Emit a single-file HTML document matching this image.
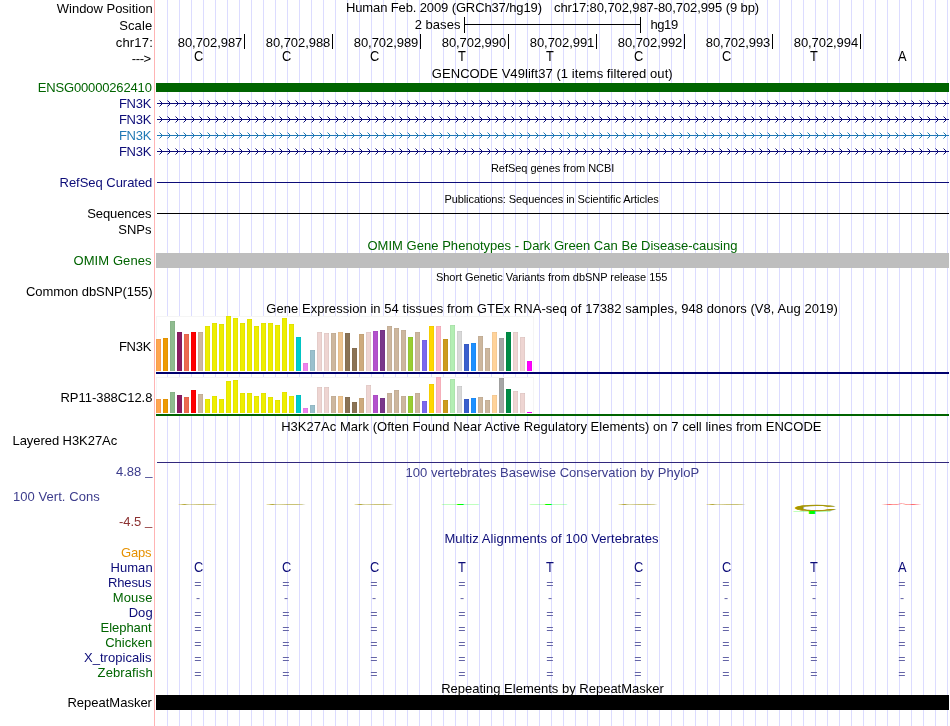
<!DOCTYPE html>
<html><head><meta charset="utf-8"><title>UCSC Genome Browser chr17:80,702,987-80,702,995</title>
<style>
html,body{margin:0;padding:0;background:#fff;}
#w{position:absolute;left:0;top:0;width:950px;height:726px;overflow:hidden;font-family:"Liberation Sans", sans-serif;}
#tx{position:absolute;left:0;top:0;width:950px;height:726px;will-change:transform;}
.t{position:absolute;white-space:nowrap;font-size:13px;line-height:17px;}
.g{font-size:14px;line-height:18px;transform:scaleX(0.915);transform-origin:0 0;}
.s{font-size:11px;line-height:15px;}
.q{font-size:12.4px;line-height:16px;}
.b{position:absolute;}
#grid{left:156px;top:0;width:794px;height:726px;background:repeating-linear-gradient(to right,transparent 0,transparent 11px,#dcdcff 11px,#dcdcff 12px);}
</style></head><body><div id="w">
<div class="b" id="grid"></div>
<div class="b" style="left:154px;top:0px;width:1px;height:726px;background:#ffb4b4;"></div>
<div class="b" style="left:464px;top:17px;width:1px;height:16px;background:#000;"></div>
<div class="b" style="left:464px;top:24px;width:177px;height:1px;background:#000;"></div>
<div class="b" style="left:640px;top:17px;width:1px;height:16px;background:#000;"></div>
<div class="b" style="left:244px;top:34px;width:1px;height:15px;background:#000;"></div>
<div class="b" style="left:332px;top:34px;width:1px;height:15px;background:#000;"></div>
<div class="b" style="left:420px;top:34px;width:1px;height:15px;background:#000;"></div>
<div class="b" style="left:508px;top:34px;width:1px;height:15px;background:#000;"></div>
<div class="b" style="left:596px;top:34px;width:1px;height:15px;background:#000;"></div>
<div class="b" style="left:684px;top:34px;width:1px;height:15px;background:#000;"></div>
<div class="b" style="left:772px;top:34px;width:1px;height:15px;background:#000;"></div>
<div class="b" style="left:860px;top:34px;width:1px;height:15px;background:#000;"></div>
<div class="b" style="left:156px;top:83px;width:793px;height:9px;background:#006400;"></div>
<svg class="b" style="left:0;top:99px" width="950" height="9" viewBox="0 -4 950 9"><path d="M157 0.5H949" stroke="#0c0c78" stroke-width="1" fill="none"/><path transform="translate(0.5,0.5)" d="M159 -3L162 0L159 3M167 -3L170 0L167 3M175 -3L178 0L175 3M183 -3L186 0L183 3M191 -3L194 0L191 3M199 -3L202 0L199 3M207 -3L210 0L207 3M215 -3L218 0L215 3M223 -3L226 0L223 3M231 -3L234 0L231 3M239 -3L242 0L239 3M247 -3L250 0L247 3M255 -3L258 0L255 3M263 -3L266 0L263 3M271 -3L274 0L271 3M279 -3L282 0L279 3M287 -3L290 0L287 3M295 -3L298 0L295 3M303 -3L306 0L303 3M311 -3L314 0L311 3M319 -3L322 0L319 3M327 -3L330 0L327 3M335 -3L338 0L335 3M343 -3L346 0L343 3M351 -3L354 0L351 3M359 -3L362 0L359 3M367 -3L370 0L367 3M375 -3L378 0L375 3M383 -3L386 0L383 3M391 -3L394 0L391 3M399 -3L402 0L399 3M407 -3L410 0L407 3M415 -3L418 0L415 3M423 -3L426 0L423 3M431 -3L434 0L431 3M439 -3L442 0L439 3M447 -3L450 0L447 3M455 -3L458 0L455 3M463 -3L466 0L463 3M471 -3L474 0L471 3M479 -3L482 0L479 3M487 -3L490 0L487 3M495 -3L498 0L495 3M503 -3L506 0L503 3M511 -3L514 0L511 3M519 -3L522 0L519 3M527 -3L530 0L527 3M535 -3L538 0L535 3M543 -3L546 0L543 3M551 -3L554 0L551 3M559 -3L562 0L559 3M567 -3L570 0L567 3M575 -3L578 0L575 3M583 -3L586 0L583 3M591 -3L594 0L591 3M599 -3L602 0L599 3M607 -3L610 0L607 3M615 -3L618 0L615 3M623 -3L626 0L623 3M631 -3L634 0L631 3M639 -3L642 0L639 3M647 -3L650 0L647 3M655 -3L658 0L655 3M663 -3L666 0L663 3M671 -3L674 0L671 3M679 -3L682 0L679 3M687 -3L690 0L687 3M695 -3L698 0L695 3M703 -3L706 0L703 3M711 -3L714 0L711 3M719 -3L722 0L719 3M727 -3L730 0L727 3M735 -3L738 0L735 3M743 -3L746 0L743 3M751 -3L754 0L751 3M759 -3L762 0L759 3M767 -3L770 0L767 3M775 -3L778 0L775 3M783 -3L786 0L783 3M791 -3L794 0L791 3M799 -3L802 0L799 3M807 -3L810 0L807 3M815 -3L818 0L815 3M823 -3L826 0L823 3M831 -3L834 0L831 3M839 -3L842 0L839 3M847 -3L850 0L847 3M855 -3L858 0L855 3M863 -3L866 0L863 3M871 -3L874 0L871 3M879 -3L882 0L879 3M887 -3L890 0L887 3M895 -3L898 0L895 3M903 -3L906 0L903 3M911 -3L914 0L911 3M919 -3L922 0L919 3M927 -3L930 0L927 3M935 -3L938 0L935 3M943 -3L946 0L943 3" stroke="#0c0c78" stroke-width="1" fill="none"/></svg>
<svg class="b" style="left:0;top:115px" width="950" height="9" viewBox="0 -4 950 9"><path d="M157 0.5H949" stroke="#0c0c78" stroke-width="1" fill="none"/><path transform="translate(0.5,0.5)" d="M159 -3L162 0L159 3M167 -3L170 0L167 3M175 -3L178 0L175 3M183 -3L186 0L183 3M191 -3L194 0L191 3M199 -3L202 0L199 3M207 -3L210 0L207 3M215 -3L218 0L215 3M223 -3L226 0L223 3M231 -3L234 0L231 3M239 -3L242 0L239 3M247 -3L250 0L247 3M255 -3L258 0L255 3M263 -3L266 0L263 3M271 -3L274 0L271 3M279 -3L282 0L279 3M287 -3L290 0L287 3M295 -3L298 0L295 3M303 -3L306 0L303 3M311 -3L314 0L311 3M319 -3L322 0L319 3M327 -3L330 0L327 3M335 -3L338 0L335 3M343 -3L346 0L343 3M351 -3L354 0L351 3M359 -3L362 0L359 3M367 -3L370 0L367 3M375 -3L378 0L375 3M383 -3L386 0L383 3M391 -3L394 0L391 3M399 -3L402 0L399 3M407 -3L410 0L407 3M415 -3L418 0L415 3M423 -3L426 0L423 3M431 -3L434 0L431 3M439 -3L442 0L439 3M447 -3L450 0L447 3M455 -3L458 0L455 3M463 -3L466 0L463 3M471 -3L474 0L471 3M479 -3L482 0L479 3M487 -3L490 0L487 3M495 -3L498 0L495 3M503 -3L506 0L503 3M511 -3L514 0L511 3M519 -3L522 0L519 3M527 -3L530 0L527 3M535 -3L538 0L535 3M543 -3L546 0L543 3M551 -3L554 0L551 3M559 -3L562 0L559 3M567 -3L570 0L567 3M575 -3L578 0L575 3M583 -3L586 0L583 3M591 -3L594 0L591 3M599 -3L602 0L599 3M607 -3L610 0L607 3M615 -3L618 0L615 3M623 -3L626 0L623 3M631 -3L634 0L631 3M639 -3L642 0L639 3M647 -3L650 0L647 3M655 -3L658 0L655 3M663 -3L666 0L663 3M671 -3L674 0L671 3M679 -3L682 0L679 3M687 -3L690 0L687 3M695 -3L698 0L695 3M703 -3L706 0L703 3M711 -3L714 0L711 3M719 -3L722 0L719 3M727 -3L730 0L727 3M735 -3L738 0L735 3M743 -3L746 0L743 3M751 -3L754 0L751 3M759 -3L762 0L759 3M767 -3L770 0L767 3M775 -3L778 0L775 3M783 -3L786 0L783 3M791 -3L794 0L791 3M799 -3L802 0L799 3M807 -3L810 0L807 3M815 -3L818 0L815 3M823 -3L826 0L823 3M831 -3L834 0L831 3M839 -3L842 0L839 3M847 -3L850 0L847 3M855 -3L858 0L855 3M863 -3L866 0L863 3M871 -3L874 0L871 3M879 -3L882 0L879 3M887 -3L890 0L887 3M895 -3L898 0L895 3M903 -3L906 0L903 3M911 -3L914 0L911 3M919 -3L922 0L919 3M927 -3L930 0L927 3M935 -3L938 0L935 3M943 -3L946 0L943 3" stroke="#0c0c78" stroke-width="1" fill="none"/></svg>
<svg class="b" style="left:0;top:131px" width="950" height="9" viewBox="0 -4 950 9"><path d="M157 0.5H949" stroke="#1f78b4" stroke-width="1" fill="none"/><path transform="translate(0.5,0.5)" d="M159 -3L162 0L159 3M167 -3L170 0L167 3M175 -3L178 0L175 3M183 -3L186 0L183 3M191 -3L194 0L191 3M199 -3L202 0L199 3M207 -3L210 0L207 3M215 -3L218 0L215 3M223 -3L226 0L223 3M231 -3L234 0L231 3M239 -3L242 0L239 3M247 -3L250 0L247 3M255 -3L258 0L255 3M263 -3L266 0L263 3M271 -3L274 0L271 3M279 -3L282 0L279 3M287 -3L290 0L287 3M295 -3L298 0L295 3M303 -3L306 0L303 3M311 -3L314 0L311 3M319 -3L322 0L319 3M327 -3L330 0L327 3M335 -3L338 0L335 3M343 -3L346 0L343 3M351 -3L354 0L351 3M359 -3L362 0L359 3M367 -3L370 0L367 3M375 -3L378 0L375 3M383 -3L386 0L383 3M391 -3L394 0L391 3M399 -3L402 0L399 3M407 -3L410 0L407 3M415 -3L418 0L415 3M423 -3L426 0L423 3M431 -3L434 0L431 3M439 -3L442 0L439 3M447 -3L450 0L447 3M455 -3L458 0L455 3M463 -3L466 0L463 3M471 -3L474 0L471 3M479 -3L482 0L479 3M487 -3L490 0L487 3M495 -3L498 0L495 3M503 -3L506 0L503 3M511 -3L514 0L511 3M519 -3L522 0L519 3M527 -3L530 0L527 3M535 -3L538 0L535 3M543 -3L546 0L543 3M551 -3L554 0L551 3M559 -3L562 0L559 3M567 -3L570 0L567 3M575 -3L578 0L575 3M583 -3L586 0L583 3M591 -3L594 0L591 3M599 -3L602 0L599 3M607 -3L610 0L607 3M615 -3L618 0L615 3M623 -3L626 0L623 3M631 -3L634 0L631 3M639 -3L642 0L639 3M647 -3L650 0L647 3M655 -3L658 0L655 3M663 -3L666 0L663 3M671 -3L674 0L671 3M679 -3L682 0L679 3M687 -3L690 0L687 3M695 -3L698 0L695 3M703 -3L706 0L703 3M711 -3L714 0L711 3M719 -3L722 0L719 3M727 -3L730 0L727 3M735 -3L738 0L735 3M743 -3L746 0L743 3M751 -3L754 0L751 3M759 -3L762 0L759 3M767 -3L770 0L767 3M775 -3L778 0L775 3M783 -3L786 0L783 3M791 -3L794 0L791 3M799 -3L802 0L799 3M807 -3L810 0L807 3M815 -3L818 0L815 3M823 -3L826 0L823 3M831 -3L834 0L831 3M839 -3L842 0L839 3M847 -3L850 0L847 3M855 -3L858 0L855 3M863 -3L866 0L863 3M871 -3L874 0L871 3M879 -3L882 0L879 3M887 -3L890 0L887 3M895 -3L898 0L895 3M903 -3L906 0L903 3M911 -3L914 0L911 3M919 -3L922 0L919 3M927 -3L930 0L927 3M935 -3L938 0L935 3M943 -3L946 0L943 3" stroke="#1f78b4" stroke-width="1" fill="none"/></svg>
<svg class="b" style="left:0;top:147px" width="950" height="9" viewBox="0 -4 950 9"><path d="M157 0.5H949" stroke="#0c0c78" stroke-width="1" fill="none"/><path transform="translate(0.5,0.5)" d="M159 -3L162 0L159 3M167 -3L170 0L167 3M175 -3L178 0L175 3M183 -3L186 0L183 3M191 -3L194 0L191 3M199 -3L202 0L199 3M207 -3L210 0L207 3M215 -3L218 0L215 3M223 -3L226 0L223 3M231 -3L234 0L231 3M239 -3L242 0L239 3M247 -3L250 0L247 3M255 -3L258 0L255 3M263 -3L266 0L263 3M271 -3L274 0L271 3M279 -3L282 0L279 3M287 -3L290 0L287 3M295 -3L298 0L295 3M303 -3L306 0L303 3M311 -3L314 0L311 3M319 -3L322 0L319 3M327 -3L330 0L327 3M335 -3L338 0L335 3M343 -3L346 0L343 3M351 -3L354 0L351 3M359 -3L362 0L359 3M367 -3L370 0L367 3M375 -3L378 0L375 3M383 -3L386 0L383 3M391 -3L394 0L391 3M399 -3L402 0L399 3M407 -3L410 0L407 3M415 -3L418 0L415 3M423 -3L426 0L423 3M431 -3L434 0L431 3M439 -3L442 0L439 3M447 -3L450 0L447 3M455 -3L458 0L455 3M463 -3L466 0L463 3M471 -3L474 0L471 3M479 -3L482 0L479 3M487 -3L490 0L487 3M495 -3L498 0L495 3M503 -3L506 0L503 3M511 -3L514 0L511 3M519 -3L522 0L519 3M527 -3L530 0L527 3M535 -3L538 0L535 3M543 -3L546 0L543 3M551 -3L554 0L551 3M559 -3L562 0L559 3M567 -3L570 0L567 3M575 -3L578 0L575 3M583 -3L586 0L583 3M591 -3L594 0L591 3M599 -3L602 0L599 3M607 -3L610 0L607 3M615 -3L618 0L615 3M623 -3L626 0L623 3M631 -3L634 0L631 3M639 -3L642 0L639 3M647 -3L650 0L647 3M655 -3L658 0L655 3M663 -3L666 0L663 3M671 -3L674 0L671 3M679 -3L682 0L679 3M687 -3L690 0L687 3M695 -3L698 0L695 3M703 -3L706 0L703 3M711 -3L714 0L711 3M719 -3L722 0L719 3M727 -3L730 0L727 3M735 -3L738 0L735 3M743 -3L746 0L743 3M751 -3L754 0L751 3M759 -3L762 0L759 3M767 -3L770 0L767 3M775 -3L778 0L775 3M783 -3L786 0L783 3M791 -3L794 0L791 3M799 -3L802 0L799 3M807 -3L810 0L807 3M815 -3L818 0L815 3M823 -3L826 0L823 3M831 -3L834 0L831 3M839 -3L842 0L839 3M847 -3L850 0L847 3M855 -3L858 0L855 3M863 -3L866 0L863 3M871 -3L874 0L871 3M879 -3L882 0L879 3M887 -3L890 0L887 3M895 -3L898 0L895 3M903 -3L906 0L903 3M911 -3L914 0L911 3M919 -3L922 0L919 3M927 -3L930 0L927 3M935 -3L938 0L935 3M943 -3L946 0L943 3" stroke="#0c0c78" stroke-width="1" fill="none"/></svg>
<div class="b" style="left:157px;top:182px;width:792px;height:1px;background:#0c0c78;"></div>
<div class="b" style="left:157px;top:213px;width:792px;height:1px;background:#000;"></div>
<div class="b" style="left:156px;top:253px;width:793px;height:15px;background:#bebebe;"></div>
<div class="b" style="left:156px;top:316px;width:378px;height:56px;background:#fff;box-shadow:inset 0 1px 0 #f5f5f5, inset -1px 0 0 #f5f5f5, inset 1px 0 0 #f5f5f5;"></div>
<div class="b" style="left:156px;top:339px;width:5px;height:32px;background:#FFA54F;box-shadow:inset 1px 1px 0 rgba(0,0,0,0.04),inset -1px 0 0 rgba(0,0,0,0.04);"></div>
<div class="b" style="left:163px;top:338px;width:5px;height:33px;background:#EE9A00;box-shadow:inset 1px 1px 0 rgba(0,0,0,0.04),inset -1px 0 0 rgba(0,0,0,0.04);"></div>
<div class="b" style="left:170px;top:321px;width:5px;height:50px;background:#8FBC8F;box-shadow:inset 1px 1px 0 rgba(0,0,0,0.04),inset -1px 0 0 rgba(0,0,0,0.04);"></div>
<div class="b" style="left:177px;top:332px;width:5px;height:39px;background:#8B1C62;box-shadow:inset 1px 1px 0 rgba(0,0,0,0.04),inset -1px 0 0 rgba(0,0,0,0.04);"></div>
<div class="b" style="left:184px;top:334px;width:5px;height:37px;background:#EE6A50;box-shadow:inset 1px 1px 0 rgba(0,0,0,0.04),inset -1px 0 0 rgba(0,0,0,0.04);"></div>
<div class="b" style="left:191px;top:332px;width:5px;height:39px;background:#FF0000;box-shadow:inset 1px 1px 0 rgba(0,0,0,0.04),inset -1px 0 0 rgba(0,0,0,0.04);"></div>
<div class="b" style="left:198px;top:332px;width:5px;height:39px;background:#CDB79E;box-shadow:inset 1px 1px 0 rgba(0,0,0,0.04),inset -1px 0 0 rgba(0,0,0,0.04);"></div>
<div class="b" style="left:205px;top:326px;width:5px;height:45px;background:#EEEE00;box-shadow:inset 1px 1px 0 rgba(0,0,0,0.04),inset -1px 0 0 rgba(0,0,0,0.04);"></div>
<div class="b" style="left:212px;top:323px;width:5px;height:48px;background:#EEEE00;box-shadow:inset 1px 1px 0 rgba(0,0,0,0.04),inset -1px 0 0 rgba(0,0,0,0.04);"></div>
<div class="b" style="left:219px;top:324px;width:5px;height:47px;background:#EEEE00;box-shadow:inset 1px 1px 0 rgba(0,0,0,0.04),inset -1px 0 0 rgba(0,0,0,0.04);"></div>
<div class="b" style="left:226px;top:316px;width:5px;height:55px;background:#EEEE00;box-shadow:inset 1px 1px 0 rgba(0,0,0,0.04),inset -1px 0 0 rgba(0,0,0,0.04);"></div>
<div class="b" style="left:233px;top:318px;width:5px;height:53px;background:#EEEE00;box-shadow:inset 1px 1px 0 rgba(0,0,0,0.04),inset -1px 0 0 rgba(0,0,0,0.04);"></div>
<div class="b" style="left:240px;top:323px;width:5px;height:48px;background:#EEEE00;box-shadow:inset 1px 1px 0 rgba(0,0,0,0.04),inset -1px 0 0 rgba(0,0,0,0.04);"></div>
<div class="b" style="left:247px;top:319px;width:5px;height:52px;background:#EEEE00;box-shadow:inset 1px 1px 0 rgba(0,0,0,0.04),inset -1px 0 0 rgba(0,0,0,0.04);"></div>
<div class="b" style="left:254px;top:326px;width:5px;height:45px;background:#EEEE00;box-shadow:inset 1px 1px 0 rgba(0,0,0,0.04),inset -1px 0 0 rgba(0,0,0,0.04);"></div>
<div class="b" style="left:261px;top:323px;width:5px;height:48px;background:#EEEE00;box-shadow:inset 1px 1px 0 rgba(0,0,0,0.04),inset -1px 0 0 rgba(0,0,0,0.04);"></div>
<div class="b" style="left:268px;top:323px;width:5px;height:48px;background:#EEEE00;box-shadow:inset 1px 1px 0 rgba(0,0,0,0.04),inset -1px 0 0 rgba(0,0,0,0.04);"></div>
<div class="b" style="left:275px;top:325px;width:5px;height:46px;background:#EEEE00;box-shadow:inset 1px 1px 0 rgba(0,0,0,0.04),inset -1px 0 0 rgba(0,0,0,0.04);"></div>
<div class="b" style="left:282px;top:318px;width:5px;height:53px;background:#EEEE00;box-shadow:inset 1px 1px 0 rgba(0,0,0,0.04),inset -1px 0 0 rgba(0,0,0,0.04);"></div>
<div class="b" style="left:289px;top:324px;width:5px;height:47px;background:#EEEE00;box-shadow:inset 1px 1px 0 rgba(0,0,0,0.04),inset -1px 0 0 rgba(0,0,0,0.04);"></div>
<div class="b" style="left:296px;top:337px;width:5px;height:34px;background:#00CDCD;box-shadow:inset 1px 1px 0 rgba(0,0,0,0.04),inset -1px 0 0 rgba(0,0,0,0.04);"></div>
<div class="b" style="left:303px;top:363px;width:5px;height:8px;background:#EE82EE;box-shadow:inset 1px 1px 0 rgba(0,0,0,0.04),inset -1px 0 0 rgba(0,0,0,0.04);"></div>
<div class="b" style="left:310px;top:350px;width:5px;height:21px;background:#9AC0CD;box-shadow:inset 1px 1px 0 rgba(0,0,0,0.04),inset -1px 0 0 rgba(0,0,0,0.04);"></div>
<div class="b" style="left:317px;top:332px;width:5px;height:39px;background:#EED5D2;box-shadow:inset 1px 1px 0 rgba(0,0,0,0.04),inset -1px 0 0 rgba(0,0,0,0.04);"></div>
<div class="b" style="left:324px;top:333px;width:5px;height:38px;background:#EED5D2;box-shadow:inset 1px 1px 0 rgba(0,0,0,0.04),inset -1px 0 0 rgba(0,0,0,0.04);"></div>
<div class="b" style="left:331px;top:333px;width:5px;height:38px;background:#CDB79E;box-shadow:inset 1px 1px 0 rgba(0,0,0,0.04),inset -1px 0 0 rgba(0,0,0,0.04);"></div>
<div class="b" style="left:338px;top:332px;width:5px;height:39px;background:#EEC591;box-shadow:inset 1px 1px 0 rgba(0,0,0,0.04),inset -1px 0 0 rgba(0,0,0,0.04);"></div>
<div class="b" style="left:345px;top:333px;width:5px;height:38px;background:#8B7355;box-shadow:inset 1px 1px 0 rgba(0,0,0,0.04),inset -1px 0 0 rgba(0,0,0,0.04);"></div>
<div class="b" style="left:352px;top:348px;width:5px;height:23px;background:#8B7355;box-shadow:inset 1px 1px 0 rgba(0,0,0,0.04),inset -1px 0 0 rgba(0,0,0,0.04);"></div>
<div class="b" style="left:359px;top:334px;width:5px;height:37px;background:#CDAA7D;box-shadow:inset 1px 1px 0 rgba(0,0,0,0.04),inset -1px 0 0 rgba(0,0,0,0.04);"></div>
<div class="b" style="left:366px;top:332px;width:5px;height:39px;background:#EED5D2;box-shadow:inset 1px 1px 0 rgba(0,0,0,0.04),inset -1px 0 0 rgba(0,0,0,0.04);"></div>
<div class="b" style="left:373px;top:331px;width:5px;height:40px;background:#B452CD;box-shadow:inset 1px 1px 0 rgba(0,0,0,0.04),inset -1px 0 0 rgba(0,0,0,0.04);"></div>
<div class="b" style="left:380px;top:330px;width:5px;height:41px;background:#7A378B;box-shadow:inset 1px 1px 0 rgba(0,0,0,0.04),inset -1px 0 0 rgba(0,0,0,0.04);"></div>
<div class="b" style="left:387px;top:326px;width:5px;height:45px;background:#CDB79E;box-shadow:inset 1px 1px 0 rgba(0,0,0,0.04),inset -1px 0 0 rgba(0,0,0,0.04);"></div>
<div class="b" style="left:394px;top:328px;width:5px;height:43px;background:#CDB79E;box-shadow:inset 1px 1px 0 rgba(0,0,0,0.04),inset -1px 0 0 rgba(0,0,0,0.04);"></div>
<div class="b" style="left:401px;top:330px;width:5px;height:41px;background:#CDB79E;box-shadow:inset 1px 1px 0 rgba(0,0,0,0.04),inset -1px 0 0 rgba(0,0,0,0.04);"></div>
<div class="b" style="left:408px;top:337px;width:5px;height:34px;background:#9ACD32;box-shadow:inset 1px 1px 0 rgba(0,0,0,0.04),inset -1px 0 0 rgba(0,0,0,0.04);"></div>
<div class="b" style="left:415px;top:332px;width:5px;height:39px;background:#CDB79E;box-shadow:inset 1px 1px 0 rgba(0,0,0,0.04),inset -1px 0 0 rgba(0,0,0,0.04);"></div>
<div class="b" style="left:422px;top:340px;width:5px;height:31px;background:#7A67EE;box-shadow:inset 1px 1px 0 rgba(0,0,0,0.04),inset -1px 0 0 rgba(0,0,0,0.04);"></div>
<div class="b" style="left:429px;top:326px;width:5px;height:45px;background:#FFD700;box-shadow:inset 1px 1px 0 rgba(0,0,0,0.04),inset -1px 0 0 rgba(0,0,0,0.04);"></div>
<div class="b" style="left:436px;top:326px;width:5px;height:45px;background:#FFB6C1;box-shadow:inset 1px 1px 0 rgba(0,0,0,0.04),inset -1px 0 0 rgba(0,0,0,0.04);"></div>
<div class="b" style="left:443px;top:339px;width:5px;height:32px;background:#CD9B1D;box-shadow:inset 1px 1px 0 rgba(0,0,0,0.04),inset -1px 0 0 rgba(0,0,0,0.04);"></div>
<div class="b" style="left:450px;top:325px;width:5px;height:46px;background:#B4EEB4;box-shadow:inset 1px 1px 0 rgba(0,0,0,0.04),inset -1px 0 0 rgba(0,0,0,0.04);"></div>
<div class="b" style="left:457px;top:331px;width:5px;height:40px;background:#D9D9D9;box-shadow:inset 1px 1px 0 rgba(0,0,0,0.04),inset -1px 0 0 rgba(0,0,0,0.04);"></div>
<div class="b" style="left:464px;top:344px;width:5px;height:27px;background:#3A5FCD;box-shadow:inset 1px 1px 0 rgba(0,0,0,0.04),inset -1px 0 0 rgba(0,0,0,0.04);"></div>
<div class="b" style="left:471px;top:343px;width:5px;height:28px;background:#1E90FF;box-shadow:inset 1px 1px 0 rgba(0,0,0,0.04),inset -1px 0 0 rgba(0,0,0,0.04);"></div>
<div class="b" style="left:478px;top:336px;width:5px;height:35px;background:#CDB79E;box-shadow:inset 1px 1px 0 rgba(0,0,0,0.04),inset -1px 0 0 rgba(0,0,0,0.04);"></div>
<div class="b" style="left:485px;top:348px;width:5px;height:23px;background:#CDB79E;box-shadow:inset 1px 1px 0 rgba(0,0,0,0.04),inset -1px 0 0 rgba(0,0,0,0.04);"></div>
<div class="b" style="left:492px;top:332px;width:5px;height:39px;background:#FFD39B;box-shadow:inset 1px 1px 0 rgba(0,0,0,0.04),inset -1px 0 0 rgba(0,0,0,0.04);"></div>
<div class="b" style="left:499px;top:338px;width:5px;height:33px;background:#A6A6A6;box-shadow:inset 1px 1px 0 rgba(0,0,0,0.04),inset -1px 0 0 rgba(0,0,0,0.04);"></div>
<div class="b" style="left:506px;top:332px;width:5px;height:39px;background:#008B45;box-shadow:inset 1px 1px 0 rgba(0,0,0,0.04),inset -1px 0 0 rgba(0,0,0,0.04);"></div>
<div class="b" style="left:513px;top:332px;width:5px;height:39px;background:#EED5D2;box-shadow:inset 1px 1px 0 rgba(0,0,0,0.04),inset -1px 0 0 rgba(0,0,0,0.04);"></div>
<div class="b" style="left:520px;top:337px;width:5px;height:34px;background:#EED5D2;box-shadow:inset 1px 1px 0 rgba(0,0,0,0.04),inset -1px 0 0 rgba(0,0,0,0.04);"></div>
<div class="b" style="left:527px;top:361px;width:5px;height:10px;background:#FF00FF;box-shadow:inset 1px 1px 0 rgba(0,0,0,0.04),inset -1px 0 0 rgba(0,0,0,0.04);"></div>
<div class="b" style="left:156px;top:372px;width:793px;height:2px;background:#00006e;"></div>
<div class="b" style="left:156px;top:377px;width:378px;height:37px;background:#fff;box-shadow:inset 0 1px 0 #f5f5f5, inset -1px 0 0 #f5f5f5, inset 1px 0 0 #f5f5f5;"></div>
<div class="b" style="left:156px;top:399px;width:5px;height:14px;background:#FFA54F;box-shadow:inset 1px 1px 0 rgba(0,0,0,0.04),inset -1px 0 0 rgba(0,0,0,0.04);"></div>
<div class="b" style="left:163px;top:399px;width:5px;height:14px;background:#EE9A00;box-shadow:inset 1px 1px 0 rgba(0,0,0,0.04),inset -1px 0 0 rgba(0,0,0,0.04);"></div>
<div class="b" style="left:170px;top:392px;width:5px;height:21px;background:#8FBC8F;box-shadow:inset 1px 1px 0 rgba(0,0,0,0.04),inset -1px 0 0 rgba(0,0,0,0.04);"></div>
<div class="b" style="left:177px;top:395px;width:5px;height:18px;background:#8B1C62;box-shadow:inset 1px 1px 0 rgba(0,0,0,0.04),inset -1px 0 0 rgba(0,0,0,0.04);"></div>
<div class="b" style="left:184px;top:397px;width:5px;height:16px;background:#EE6A50;box-shadow:inset 1px 1px 0 rgba(0,0,0,0.04),inset -1px 0 0 rgba(0,0,0,0.04);"></div>
<div class="b" style="left:191px;top:390px;width:5px;height:23px;background:#FF0000;box-shadow:inset 1px 1px 0 rgba(0,0,0,0.04),inset -1px 0 0 rgba(0,0,0,0.04);"></div>
<div class="b" style="left:198px;top:394px;width:5px;height:19px;background:#CDB79E;box-shadow:inset 1px 1px 0 rgba(0,0,0,0.04),inset -1px 0 0 rgba(0,0,0,0.04);"></div>
<div class="b" style="left:205px;top:399px;width:5px;height:14px;background:#EEEE00;box-shadow:inset 1px 1px 0 rgba(0,0,0,0.04),inset -1px 0 0 rgba(0,0,0,0.04);"></div>
<div class="b" style="left:212px;top:396px;width:5px;height:17px;background:#EEEE00;box-shadow:inset 1px 1px 0 rgba(0,0,0,0.04),inset -1px 0 0 rgba(0,0,0,0.04);"></div>
<div class="b" style="left:219px;top:399px;width:5px;height:14px;background:#EEEE00;box-shadow:inset 1px 1px 0 rgba(0,0,0,0.04),inset -1px 0 0 rgba(0,0,0,0.04);"></div>
<div class="b" style="left:226px;top:381px;width:5px;height:32px;background:#EEEE00;box-shadow:inset 1px 1px 0 rgba(0,0,0,0.04),inset -1px 0 0 rgba(0,0,0,0.04);"></div>
<div class="b" style="left:233px;top:380px;width:5px;height:33px;background:#EEEE00;box-shadow:inset 1px 1px 0 rgba(0,0,0,0.04),inset -1px 0 0 rgba(0,0,0,0.04);"></div>
<div class="b" style="left:240px;top:393px;width:5px;height:20px;background:#EEEE00;box-shadow:inset 1px 1px 0 rgba(0,0,0,0.04),inset -1px 0 0 rgba(0,0,0,0.04);"></div>
<div class="b" style="left:247px;top:393px;width:5px;height:20px;background:#EEEE00;box-shadow:inset 1px 1px 0 rgba(0,0,0,0.04),inset -1px 0 0 rgba(0,0,0,0.04);"></div>
<div class="b" style="left:254px;top:396px;width:5px;height:17px;background:#EEEE00;box-shadow:inset 1px 1px 0 rgba(0,0,0,0.04),inset -1px 0 0 rgba(0,0,0,0.04);"></div>
<div class="b" style="left:261px;top:393px;width:5px;height:20px;background:#EEEE00;box-shadow:inset 1px 1px 0 rgba(0,0,0,0.04),inset -1px 0 0 rgba(0,0,0,0.04);"></div>
<div class="b" style="left:268px;top:397px;width:5px;height:16px;background:#EEEE00;box-shadow:inset 1px 1px 0 rgba(0,0,0,0.04),inset -1px 0 0 rgba(0,0,0,0.04);"></div>
<div class="b" style="left:275px;top:400px;width:5px;height:13px;background:#EEEE00;box-shadow:inset 1px 1px 0 rgba(0,0,0,0.04),inset -1px 0 0 rgba(0,0,0,0.04);"></div>
<div class="b" style="left:282px;top:392px;width:5px;height:21px;background:#EEEE00;box-shadow:inset 1px 1px 0 rgba(0,0,0,0.04),inset -1px 0 0 rgba(0,0,0,0.04);"></div>
<div class="b" style="left:289px;top:396px;width:5px;height:17px;background:#EEEE00;box-shadow:inset 1px 1px 0 rgba(0,0,0,0.04),inset -1px 0 0 rgba(0,0,0,0.04);"></div>
<div class="b" style="left:296px;top:395px;width:5px;height:18px;background:#00CDCD;box-shadow:inset 1px 1px 0 rgba(0,0,0,0.04),inset -1px 0 0 rgba(0,0,0,0.04);"></div>
<div class="b" style="left:303px;top:408px;width:5px;height:5px;background:#EE82EE;box-shadow:inset 1px 1px 0 rgba(0,0,0,0.04),inset -1px 0 0 rgba(0,0,0,0.04);"></div>
<div class="b" style="left:310px;top:405px;width:5px;height:8px;background:#9AC0CD;box-shadow:inset 1px 1px 0 rgba(0,0,0,0.04),inset -1px 0 0 rgba(0,0,0,0.04);"></div>
<div class="b" style="left:317px;top:387px;width:5px;height:26px;background:#EED5D2;box-shadow:inset 1px 1px 0 rgba(0,0,0,0.04),inset -1px 0 0 rgba(0,0,0,0.04);"></div>
<div class="b" style="left:324px;top:387px;width:5px;height:26px;background:#EED5D2;box-shadow:inset 1px 1px 0 rgba(0,0,0,0.04),inset -1px 0 0 rgba(0,0,0,0.04);"></div>
<div class="b" style="left:331px;top:396px;width:5px;height:17px;background:#CDB79E;box-shadow:inset 1px 1px 0 rgba(0,0,0,0.04),inset -1px 0 0 rgba(0,0,0,0.04);"></div>
<div class="b" style="left:338px;top:396px;width:5px;height:17px;background:#EEC591;box-shadow:inset 1px 1px 0 rgba(0,0,0,0.04),inset -1px 0 0 rgba(0,0,0,0.04);"></div>
<div class="b" style="left:345px;top:397px;width:5px;height:16px;background:#8B7355;box-shadow:inset 1px 1px 0 rgba(0,0,0,0.04),inset -1px 0 0 rgba(0,0,0,0.04);"></div>
<div class="b" style="left:352px;top:402px;width:5px;height:11px;background:#8B7355;box-shadow:inset 1px 1px 0 rgba(0,0,0,0.04),inset -1px 0 0 rgba(0,0,0,0.04);"></div>
<div class="b" style="left:359px;top:398px;width:5px;height:15px;background:#CDAA7D;box-shadow:inset 1px 1px 0 rgba(0,0,0,0.04),inset -1px 0 0 rgba(0,0,0,0.04);"></div>
<div class="b" style="left:366px;top:385px;width:5px;height:28px;background:#EED5D2;box-shadow:inset 1px 1px 0 rgba(0,0,0,0.04),inset -1px 0 0 rgba(0,0,0,0.04);"></div>
<div class="b" style="left:373px;top:395px;width:5px;height:18px;background:#B452CD;box-shadow:inset 1px 1px 0 rgba(0,0,0,0.04),inset -1px 0 0 rgba(0,0,0,0.04);"></div>
<div class="b" style="left:380px;top:398px;width:5px;height:15px;background:#7A378B;box-shadow:inset 1px 1px 0 rgba(0,0,0,0.04),inset -1px 0 0 rgba(0,0,0,0.04);"></div>
<div class="b" style="left:387px;top:393px;width:5px;height:20px;background:#CDB79E;box-shadow:inset 1px 1px 0 rgba(0,0,0,0.04),inset -1px 0 0 rgba(0,0,0,0.04);"></div>
<div class="b" style="left:394px;top:390px;width:5px;height:23px;background:#CDB79E;box-shadow:inset 1px 1px 0 rgba(0,0,0,0.04),inset -1px 0 0 rgba(0,0,0,0.04);"></div>
<div class="b" style="left:401px;top:396px;width:5px;height:17px;background:#CDB79E;box-shadow:inset 1px 1px 0 rgba(0,0,0,0.04),inset -1px 0 0 rgba(0,0,0,0.04);"></div>
<div class="b" style="left:408px;top:396px;width:5px;height:17px;background:#9ACD32;box-shadow:inset 1px 1px 0 rgba(0,0,0,0.04),inset -1px 0 0 rgba(0,0,0,0.04);"></div>
<div class="b" style="left:415px;top:393px;width:5px;height:20px;background:#CDB79E;box-shadow:inset 1px 1px 0 rgba(0,0,0,0.04),inset -1px 0 0 rgba(0,0,0,0.04);"></div>
<div class="b" style="left:422px;top:401px;width:5px;height:12px;background:#7A67EE;box-shadow:inset 1px 1px 0 rgba(0,0,0,0.04),inset -1px 0 0 rgba(0,0,0,0.04);"></div>
<div class="b" style="left:429px;top:384px;width:5px;height:29px;background:#FFD700;box-shadow:inset 1px 1px 0 rgba(0,0,0,0.04),inset -1px 0 0 rgba(0,0,0,0.04);"></div>
<div class="b" style="left:436px;top:377px;width:5px;height:36px;background:#FFB6C1;box-shadow:inset 1px 1px 0 rgba(0,0,0,0.04),inset -1px 0 0 rgba(0,0,0,0.04);"></div>
<div class="b" style="left:443px;top:400px;width:5px;height:13px;background:#CD9B1D;box-shadow:inset 1px 1px 0 rgba(0,0,0,0.04),inset -1px 0 0 rgba(0,0,0,0.04);"></div>
<div class="b" style="left:450px;top:379px;width:5px;height:34px;background:#B4EEB4;box-shadow:inset 1px 1px 0 rgba(0,0,0,0.04),inset -1px 0 0 rgba(0,0,0,0.04);"></div>
<div class="b" style="left:457px;top:386px;width:5px;height:27px;background:#D9D9D9;box-shadow:inset 1px 1px 0 rgba(0,0,0,0.04),inset -1px 0 0 rgba(0,0,0,0.04);"></div>
<div class="b" style="left:464px;top:399px;width:5px;height:14px;background:#3A5FCD;box-shadow:inset 1px 1px 0 rgba(0,0,0,0.04),inset -1px 0 0 rgba(0,0,0,0.04);"></div>
<div class="b" style="left:471px;top:398px;width:5px;height:15px;background:#1E90FF;box-shadow:inset 1px 1px 0 rgba(0,0,0,0.04),inset -1px 0 0 rgba(0,0,0,0.04);"></div>
<div class="b" style="left:478px;top:397px;width:5px;height:16px;background:#CDB79E;box-shadow:inset 1px 1px 0 rgba(0,0,0,0.04),inset -1px 0 0 rgba(0,0,0,0.04);"></div>
<div class="b" style="left:485px;top:400px;width:5px;height:13px;background:#CDB79E;box-shadow:inset 1px 1px 0 rgba(0,0,0,0.04),inset -1px 0 0 rgba(0,0,0,0.04);"></div>
<div class="b" style="left:492px;top:395px;width:5px;height:18px;background:#FFD39B;box-shadow:inset 1px 1px 0 rgba(0,0,0,0.04),inset -1px 0 0 rgba(0,0,0,0.04);"></div>
<div class="b" style="left:499px;top:378px;width:5px;height:35px;background:#A6A6A6;box-shadow:inset 1px 1px 0 rgba(0,0,0,0.04),inset -1px 0 0 rgba(0,0,0,0.04);"></div>
<div class="b" style="left:506px;top:389px;width:5px;height:24px;background:#008B45;box-shadow:inset 1px 1px 0 rgba(0,0,0,0.04),inset -1px 0 0 rgba(0,0,0,0.04);"></div>
<div class="b" style="left:513px;top:391px;width:5px;height:22px;background:#EED5D2;box-shadow:inset 1px 1px 0 rgba(0,0,0,0.04),inset -1px 0 0 rgba(0,0,0,0.04);"></div>
<div class="b" style="left:520px;top:393px;width:5px;height:20px;background:#EED5D2;box-shadow:inset 1px 1px 0 rgba(0,0,0,0.04),inset -1px 0 0 rgba(0,0,0,0.04);"></div>
<div class="b" style="left:527px;top:412px;width:5px;height:1px;background:#FF00FF;box-shadow:inset 1px 1px 0 rgba(0,0,0,0.04),inset -1px 0 0 rgba(0,0,0,0.04);"></div>
<div class="b" style="left:156px;top:414px;width:793px;height:2px;background:#006400;"></div>
<div class="b" style="left:157px;top:462px;width:792px;height:1px;background:#32287c;"></div>
<div class="b" style="left:156px;top:695px;width:793px;height:15px;background:#000;"></div>
<svg class="b" style="left:0;top:0" width="950" height="726" font-family="Liberation Sans, sans-serif" font-size="100"><text transform="matrix(0.6062 0 0 0.00962 175.93 504.831)" fill="#a59600" stroke="#a59600" stroke-width="2">C</text><text transform="matrix(0.6062 0 0 0.00962 263.93 504.831)" fill="#a59600" stroke="#a59600" stroke-width="2">C</text><text transform="matrix(0.6062 0 0 0.00962 351.93 504.831)" fill="#a59600" stroke="#a59600" stroke-width="2">C</text><text transform="matrix(0.6615 0 0 0.01163 439.91 504.900)" fill="#00ff00">T</text><text transform="matrix(0.6615 0 0 0.01163 527.91 504.900)" fill="#00ff00">T</text><text transform="matrix(0.6062 0 0 0.00962 615.93 504.831)" fill="#a59600" stroke="#a59600" stroke-width="2">C</text><text transform="matrix(0.6062 0 0 0.00962 703.93 504.831)" fill="#a59600" stroke="#a59600" stroke-width="2">C</text><text transform="matrix(0.6060 0 0 0.08155 793.13 510.707)" fill="#a59600" stroke="#a59600" stroke-width="4">C</text><text transform="matrix(0.6615 0 0 0.04215 791.71 513.900)" fill="#00ff00">T</text><text transform="matrix(0.5533 0 0 0.01003 883.35 504.870)" fill="#ff0000" stroke="#ff0000" stroke-width="6" opacity="0.85">A</text></svg>
<div id="tx">
<div class="t" style="left:56.80px;top:0px;color:#000;letter-spacing:-0.019px;">Window Position</div>
<div class="t" style="left:119.19px;top:17px;color:#000;letter-spacing:0.104px;">Scale</div>
<div class="t" style="left:115.79px;top:34px;color:#000;letter-spacing:0.170px;">chr17:</div>
<div class="t" style="left:131.79px;top:50px;color:#000;letter-spacing:-0.397px;">---&gt;</div>
<div class="t" style="left:345.98px;top:-1px;color:#000;letter-spacing:-0.123px;">Human Feb. 2009 (GRCh37/hg19)</div>
<div class="t" style="left:553.99px;top:-1px;color:#000;letter-spacing:-0.090px;">chr17:80,702,987-80,702,995 (9 bp)</div>
<div class="t" style="left:414.69px;top:16px;color:#000;letter-spacing:0.031px;">2 bases</div>
<div class="t" style="left:650.39px;top:16px;color:#000;letter-spacing:-0.360px;">hg19</div>
<div class="t" style="left:177.79px;top:34px;color:#000;letter-spacing:-0.059px;">80,702,987</div>
<div class="t" style="left:265.79px;top:34px;color:#000;letter-spacing:-0.059px;">80,702,988</div>
<div class="t" style="left:353.79px;top:34px;color:#000;letter-spacing:-0.059px;">80,702,989</div>
<div class="t" style="left:441.79px;top:34px;color:#000;letter-spacing:-0.081px;">80,702,990</div>
<div class="t" style="left:529.79px;top:34px;color:#000;letter-spacing:-0.059px;">80,702,991</div>
<div class="t" style="left:617.79px;top:34px;color:#000;letter-spacing:-0.059px;">80,702,992</div>
<div class="t" style="left:705.79px;top:34px;color:#000;letter-spacing:-0.059px;">80,702,993</div>
<div class="t" style="left:793.79px;top:34px;color:#000;letter-spacing:-0.081px;">80,702,994</div>
<div class="t g" style="left:194.00px;top:47px;color:#000;">C</div>
<div class="t g" style="left:282.00px;top:47px;color:#000;">C</div>
<div class="t g" style="left:370.00px;top:47px;color:#000;">C</div>
<div class="t g" style="left:458.10px;top:47px;color:#000;">T</div>
<div class="t g" style="left:546.10px;top:47px;color:#000;">T</div>
<div class="t g" style="left:634.00px;top:47px;color:#000;">C</div>
<div class="t g" style="left:722.00px;top:47px;color:#000;">C</div>
<div class="t g" style="left:810.10px;top:47px;color:#000;">T</div>
<div class="t g" style="left:898.40px;top:47px;color:#000;">A</div>
<div class="t" style="left:431.79px;top:65px;color:#000;letter-spacing:0.063px;">GENCODE V49lift37 (1 items filtered out)</div>
<div class="t" style="left:37.68px;top:79px;color:#006400;letter-spacing:-0.152px;">ENSG00000262410</div>
<div class="t" style="left:118.88px;top:95px;color:#0c0c78;letter-spacing:-0.258px;">FN3K</div>
<div class="t" style="left:118.88px;top:111px;color:#0c0c78;letter-spacing:-0.258px;">FN3K</div>
<div class="t" style="left:118.88px;top:127px;color:#1f78b4;letter-spacing:-0.258px;">FN3K</div>
<div class="t" style="left:118.88px;top:143px;color:#0c0c78;letter-spacing:-0.258px;">FN3K</div>
<div class="t s" style="left:490.90px;top:161px;color:#000;letter-spacing:-0.029px;">RefSeq genes from NCBI</div>
<div class="t" style="left:59.58px;top:174px;color:#0c0c78;letter-spacing:-0.037px;">RefSeq Curated</div>
<div class="t s" style="left:444.40px;top:192px;color:#000;letter-spacing:-0.074px;">Publications: Sequences in Scientific Articles</div>
<div class="t" style="left:87.19px;top:205px;color:#000;letter-spacing:-0.092px;">Sequences</div>
<div class="t" style="left:118.29px;top:221px;color:#000;letter-spacing:-0.006px;">SNPs</div>
<div class="t" style="left:367.49px;top:237px;color:#006400;letter-spacing:0.028px;">OMIM Gene Phenotypes - Dark Green Can Be Disease-causing</div>
<div class="t" style="left:73.49px;top:252px;color:#006400;letter-spacing:0.080px;">OMIM Genes</div>
<div class="t s" style="left:435.95px;top:270px;color:#000;letter-spacing:-0.038px;">Short Genetic Variants from dbSNP release 155</div>
<div class="t" style="left:25.99px;top:283px;color:#000;letter-spacing:-0.082px;">Common dbSNP(155)</div>
<div class="t" style="left:266.29px;top:300px;color:#000;letter-spacing:0.048px;">Gene Expression in 54 tissues from GTEx RNA-seq of 17382 samples, 948 donors (V8, Aug 2019)</div>
<div class="t" style="left:118.88px;top:338px;color:#000;letter-spacing:-0.258px;">FN3K</div>
<div class="t" style="left:60.48px;top:389px;color:#000;letter-spacing:-0.027px;">RP11-388C12.8</div>
<div class="t" style="left:281.18px;top:418px;color:#000;letter-spacing:0.033px;">H3K27Ac Mark (Often Found Near Active Regulatory Elements) on 7 cell lines from ENCODE</div>
<div class="t" style="left:12.48px;top:432px;color:#000;letter-spacing:-0.057px;">Layered H3K27Ac</div>
<div class="t" style="left:405.59px;top:464px;color:#3c3c8c;letter-spacing:0.035px;">100 vertebrates Basewise Conservation by PhyloP</div>
<div class="t" style="left:116.00px;top:463px;color:#3c3c8c;letter-spacing:-0.057px;">4.88</div>
<div class="t" style="left:145.30px;top:462px;color:#3c3c8c;letter-spacing:-0.100px;">_</div>
<div class="t" style="left:12.99px;top:488px;color:#3c3c8c;letter-spacing:0.055px;">100 Vert. Cons</div>
<div class="t" style="left:119.09px;top:513px;color:#8c3232;letter-spacing:-0.123px;">-4.5</div>
<div class="t" style="left:145.00px;top:512px;color:#8c3232;letter-spacing:-0.100px;">_</div>
<div class="t" style="left:444.38px;top:530px;color:#0c0c78;letter-spacing:0.091px;">Multiz Alignments of 100 Vertebrates</div>
<div class="t" style="left:120.99px;top:544px;color:#e69100;letter-spacing:-0.185px;">Gaps</div>
<div class="t" style="left:110.48px;top:559px;color:#0c0c78;letter-spacing:0.060px;">Human</div>
<div class="t g" style="left:194.00px;top:558px;color:#0c0c78;">C</div>
<div class="t g" style="left:282.00px;top:558px;color:#0c0c78;">C</div>
<div class="t g" style="left:370.00px;top:558px;color:#0c0c78;">C</div>
<div class="t g" style="left:458.10px;top:558px;color:#0c0c78;">T</div>
<div class="t g" style="left:546.10px;top:558px;color:#0c0c78;">T</div>
<div class="t g" style="left:634.00px;top:558px;color:#0c0c78;">C</div>
<div class="t g" style="left:722.00px;top:558px;color:#0c0c78;">C</div>
<div class="t g" style="left:810.10px;top:558px;color:#0c0c78;">T</div>
<div class="t g" style="left:898.40px;top:558px;color:#0c0c78;">A</div>
<div class="t" style="left:107.88px;top:574px;color:#0c0c78;letter-spacing:-0.091px;">Rhesus</div>
<div class="t q" style="left:194.17px;top:576px;color:#6464a6;">=</div>
<div class="t q" style="left:282.18px;top:576px;color:#6464a6;">=</div>
<div class="t q" style="left:370.18px;top:576px;color:#6464a6;">=</div>
<div class="t q" style="left:458.18px;top:576px;color:#6464a6;">=</div>
<div class="t q" style="left:546.18px;top:576px;color:#6464a6;">=</div>
<div class="t q" style="left:634.18px;top:576px;color:#6464a6;">=</div>
<div class="t q" style="left:722.18px;top:576px;color:#6464a6;">=</div>
<div class="t q" style="left:810.18px;top:576px;color:#6464a6;">=</div>
<div class="t q" style="left:898.18px;top:576px;color:#6464a6;">=</div>
<div class="t" style="left:112.68px;top:589px;color:#006400;letter-spacing:0.181px;">Mouse</div>
<div class="t q" style="left:196.03px;top:590px;color:#6464a6;">-</div>
<div class="t q" style="left:284.02px;top:590px;color:#6464a6;">-</div>
<div class="t q" style="left:372.02px;top:590px;color:#6464a6;">-</div>
<div class="t q" style="left:460.02px;top:590px;color:#6464a6;">-</div>
<div class="t q" style="left:548.02px;top:590px;color:#6464a6;">-</div>
<div class="t q" style="left:636.02px;top:590px;color:#6464a6;">-</div>
<div class="t q" style="left:724.02px;top:590px;color:#6464a6;">-</div>
<div class="t q" style="left:812.02px;top:590px;color:#6464a6;">-</div>
<div class="t q" style="left:900.02px;top:590px;color:#6464a6;">-</div>
<div class="t" style="left:128.68px;top:604px;color:#0c0c78;letter-spacing:0.049px;">Dog</div>
<div class="t q" style="left:194.17px;top:606px;color:#6464a6;">=</div>
<div class="t q" style="left:282.18px;top:606px;color:#6464a6;">=</div>
<div class="t q" style="left:370.18px;top:606px;color:#6464a6;">=</div>
<div class="t q" style="left:458.18px;top:606px;color:#6464a6;">=</div>
<div class="t q" style="left:546.18px;top:606px;color:#6464a6;">=</div>
<div class="t q" style="left:634.18px;top:606px;color:#6464a6;">=</div>
<div class="t q" style="left:722.18px;top:606px;color:#6464a6;">=</div>
<div class="t q" style="left:810.18px;top:606px;color:#6464a6;">=</div>
<div class="t q" style="left:898.18px;top:606px;color:#6464a6;">=</div>
<div class="t" style="left:100.58px;top:619px;color:#006400;letter-spacing:-0.050px;">Elephant</div>
<div class="t q" style="left:194.17px;top:621px;color:#6464a6;">=</div>
<div class="t q" style="left:282.18px;top:621px;color:#6464a6;">=</div>
<div class="t q" style="left:370.18px;top:621px;color:#6464a6;">=</div>
<div class="t q" style="left:458.18px;top:621px;color:#6464a6;">=</div>
<div class="t q" style="left:546.18px;top:621px;color:#6464a6;">=</div>
<div class="t q" style="left:634.18px;top:621px;color:#6464a6;">=</div>
<div class="t q" style="left:722.18px;top:621px;color:#6464a6;">=</div>
<div class="t q" style="left:810.18px;top:621px;color:#6464a6;">=</div>
<div class="t q" style="left:898.18px;top:621px;color:#6464a6;">=</div>
<div class="t" style="left:105.19px;top:634px;color:#006400;letter-spacing:0.029px;">Chicken</div>
<div class="t q" style="left:194.17px;top:636px;color:#6464a6;">=</div>
<div class="t q" style="left:282.18px;top:636px;color:#6464a6;">=</div>
<div class="t q" style="left:370.18px;top:636px;color:#6464a6;">=</div>
<div class="t q" style="left:458.18px;top:636px;color:#6464a6;">=</div>
<div class="t q" style="left:546.18px;top:636px;color:#6464a6;">=</div>
<div class="t q" style="left:634.18px;top:636px;color:#6464a6;">=</div>
<div class="t q" style="left:722.18px;top:636px;color:#6464a6;">=</div>
<div class="t q" style="left:810.18px;top:636px;color:#6464a6;">=</div>
<div class="t q" style="left:898.18px;top:636px;color:#6464a6;">=</div>
<div class="t" style="left:84.00px;top:649px;color:#0c0c78;letter-spacing:0.028px;">X_tropicalis</div>
<div class="t q" style="left:194.17px;top:651px;color:#6464a6;">=</div>
<div class="t q" style="left:282.18px;top:651px;color:#6464a6;">=</div>
<div class="t q" style="left:370.18px;top:651px;color:#6464a6;">=</div>
<div class="t q" style="left:458.18px;top:651px;color:#6464a6;">=</div>
<div class="t q" style="left:546.18px;top:651px;color:#6464a6;">=</div>
<div class="t q" style="left:634.18px;top:651px;color:#6464a6;">=</div>
<div class="t q" style="left:722.18px;top:651px;color:#6464a6;">=</div>
<div class="t q" style="left:810.18px;top:651px;color:#6464a6;">=</div>
<div class="t q" style="left:898.18px;top:651px;color:#6464a6;">=</div>
<div class="t" style="left:97.59px;top:664px;color:#006400;letter-spacing:0.106px;">Zebrafish</div>
<div class="t q" style="left:194.17px;top:666px;color:#6464a6;">=</div>
<div class="t q" style="left:282.18px;top:666px;color:#6464a6;">=</div>
<div class="t q" style="left:370.18px;top:666px;color:#6464a6;">=</div>
<div class="t q" style="left:458.18px;top:666px;color:#6464a6;">=</div>
<div class="t q" style="left:546.18px;top:666px;color:#6464a6;">=</div>
<div class="t q" style="left:634.18px;top:666px;color:#6464a6;">=</div>
<div class="t q" style="left:722.18px;top:666px;color:#6464a6;">=</div>
<div class="t q" style="left:810.18px;top:666px;color:#6464a6;">=</div>
<div class="t q" style="left:898.18px;top:666px;color:#6464a6;">=</div>
<div class="t" style="left:441.18px;top:680px;color:#000;letter-spacing:0.004px;">Repeating Elements by RepeatMasker</div>
<div class="t" style="left:67.48px;top:694px;color:#000;letter-spacing:-0.005px;">RepeatMasker</div>
</div>
</div></body></html>
